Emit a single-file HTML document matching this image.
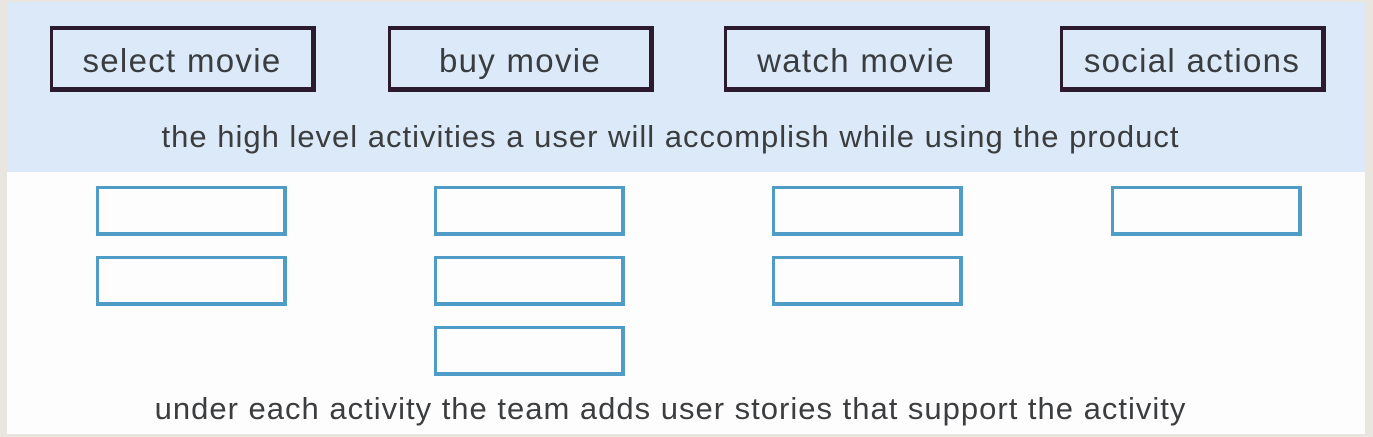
<!DOCTYPE html>
<html><head><style>
html,body{margin:0;padding:0}
body{width:1373px;height:437px;position:relative;overflow:hidden;background:#e9e6df;font-family:"Liberation Sans",sans-serif}
.page{position:absolute;left:7px;top:2px;width:1358px;height:432px;background:#fdfdfe}
.band{position:absolute;left:7px;top:2px;width:1358px;height:170px;background:#dbe9f8}
.a{position:absolute;box-sizing:border-box;border:5px solid #2c1b2e;border-left-width:3px;border-top-width:4px;height:66px;width:266px;top:26px;display:flex;align-items:center;justify-content:center;font-size:33px;color:#3a3d40;letter-spacing:1.3px;padding-top:5px}
.s{position:absolute;box-sizing:border-box;border:4px solid #4f9cc6;border-left-width:3px;border-top-width:3px;width:191px;height:50px}
.t{position:absolute;left:0;width:1373px;text-align:center;font-size:31px;color:#3b3d3f;letter-spacing:1px}
</style></head><body>
<div class="page"></div>
<div class="band"></div>
<div class="a" style="left:50px">select movie</div>
<div class="a" style="left:388px">buy movie</div>
<div class="a" style="left:724px">watch movie</div>
<div class="a" style="left:1060px">social actions</div>
<div class="t" style="top:119px;left:-16px">the high level activities a user will accomplish while using the product</div>
<div class="s" style="left:96px;top:186px"></div>
<div class="s" style="left:96px;top:256px"></div>
<div class="s" style="left:434px;top:186px"></div>
<div class="s" style="left:434px;top:256px"></div>
<div class="s" style="left:434px;top:326px"></div>
<div class="s" style="left:772px;top:186px"></div>
<div class="s" style="left:772px;top:256px"></div>
<div class="s" style="left:1111px;top:186px"></div>
<div class="t" style="top:391px;left:-16px">under each activity the team adds user stories that support the activity</div>
</body></html>
